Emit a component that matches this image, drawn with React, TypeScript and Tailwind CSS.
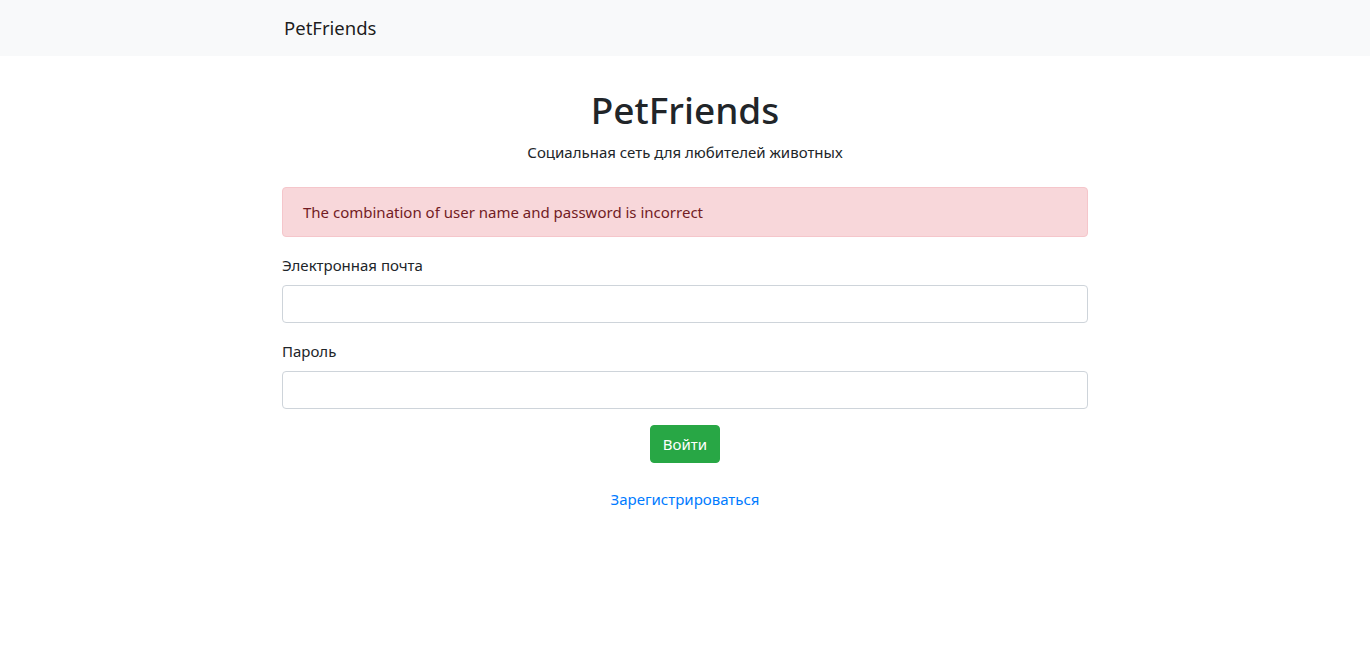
import React from "react";

export default function App() {
  return (
    <div className="min-h-screen bg-white text-[#212529] font-['Noto_Sans',sans-serif] text-[15px] leading-6">
      <nav className="h-14 bg-[#f8f9fa] flex items-center">
        <div className="mx-auto w-[806px]">
          <a href="#" className="ml-[2px] text-[18.5px] text-black/90">
            PetFriends
          </a>
        </div>
      </nav>

      <div className="mx-auto w-[806px]">
        <div className="text-center pt-[30px]">
          <h1 className="text-[37px] leading-[48px] font-medium mb-[6px]">PetFriends</h1>
          <p className="mb-[23px]">Социальная сеть для любителей животных</p>
        </div>

        <div className="bg-[#f8d7da] border border-[#f5c6cb] text-[#721c24] rounded px-5 py-3 mb-4">
          The combination of user name and password is incorrect
        </div>

        <form>
          <div className="mb-4">
            <label className="block mb-2">Электронная почта</label>
            <input type="email" className="block w-full h-[38px] border border-[#ced4da] rounded px-3 outline-none" />
          </div>
          <div className="mb-4">
            <label className="block mb-2">Пароль</label>
            <input type="password" className="block w-full h-[38px] border border-[#ced4da] rounded px-3 outline-none" />
          </div>
          <div className="text-center">
            <button type="button" className="bg-[#28a745] border border-[#28a745] text-white rounded h-[38px] px-3">
              Войти
            </button>
          </div>
        </form>

        <div className="text-center mt-6">
          <a href="#" className="text-[#007bff]">
            Зарегистрироваться
          </a>
        </div>
      </div>
    </div>
  );
}
